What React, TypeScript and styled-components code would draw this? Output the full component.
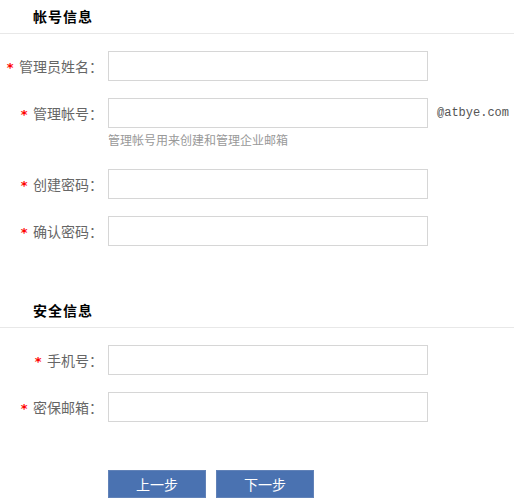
import React from "react";
import styled, { createGlobalStyle } from "styled-components";

const Global = createGlobalStyle`
  html, body { margin: 0; padding: 0; background: #fff; }
  body { font-family: "Noto Sans CJK SC", "Liberation Sans", sans-serif; font-size: 14px; color: #666; }
`;

const Page = styled.div`
  width: 514px;
  display: flex;
  flex-direction: column;
`;

const Section = styled.section<{ $gap: number }>`
  display: flex;
  flex-direction: column;
  margin-top: ${(p) => p.$gap}px;
`;

const SectionTitle = styled.h2`
  margin: 0;
  height: 33px;
  line-height: 33px;
  padding-left: 33px;
  border-bottom: 1px solid #e8e8e8;
  font-size: 14px;
  font-weight: bold;
  letter-spacing: 1px;
  color: #000;
`;

const Row = styled.div`
  display: flex;
  align-items: center;
  margin-top: 17px;
  height: 30px;
`;

const Label = styled.label`
  width: 103px;
  flex: none;
  display: flex;
  justify-content: flex-end;
  align-items: center;
  margin-right: 5px;
  font-size: 14px;
  line-height: 30px;
  color: #666;
  white-space: nowrap;
`;

const Star = styled.span`
  color: #f00;
  font-family: "DejaVu Sans Mono", monospace;
  font-weight: bold;
  font-size: 13px;
  margin-right: 5px;
  position: relative;
  top: 2px;
`;

const Input = styled.input`
  box-sizing: border-box;
  width: 320px;
  height: 30px;
  border: 1px solid #d6d6d6;
  background: #fff;
  outline: none;
  padding: 0 6px;
  margin: 0;
  font-size: 14px;
`;

const Suffix = styled.span`
  margin-left: 9px;
  font-family: "Liberation Mono", monospace;
  font-size: 12px;
  color: #555;
`;

const Hint = styled.div`
  margin: 3px 0 3px 108px;
  line-height: 18px;
  font-size: 12px;
  color: #999;
`;

const Buttons = styled.div`
  display: flex;
  gap: 10px;
  margin: 48px 0 0 108px;
`;

const Button = styled.button`
  box-sizing: border-box;
  width: 98px;
  height: 28px;
  background: #4a72b1;
  border: 1px solid #6182b8;
  color: #fff;
  font-family: "Noto Sans CJK SC", sans-serif;
  font-size: 14px;
  padding: 0;
  cursor: pointer;
`;

type Field = { label: string; suffix?: string; hint?: string };

const FieldRow: React.FC<Field> = ({ label, suffix, hint }) => (
  <>
    <Row>
      <Label>
        <Star>*</Star>
        {label}：
      </Label>
      <Input type="text" />
      {suffix && <Suffix>{suffix}</Suffix>}
    </Row>
    {hint && <Hint>{hint}</Hint>}
  </>
);

export default function App() {
  return (
    <Page>
      <Global />
      <Section $gap={0}>
        <SectionTitle>帐号信息</SectionTitle>
        <FieldRow label="管理员姓名" />
        <FieldRow label="管理帐号" suffix="@atbye.com" hint="管理帐号用来创建和管理企业邮箱" />
        <FieldRow label="创建密码" />
        <FieldRow label="确认密码" />
      </Section>
      <Section $gap={48}>
        <SectionTitle>安全信息</SectionTitle>
        <FieldRow label="手机号" />
        <FieldRow label="密保邮箱" />
      </Section>
      <Buttons>
        <Button type="button">上一步</Button>
        <Button type="button">下一步</Button>
      </Buttons>
    </Page>
  );
}
